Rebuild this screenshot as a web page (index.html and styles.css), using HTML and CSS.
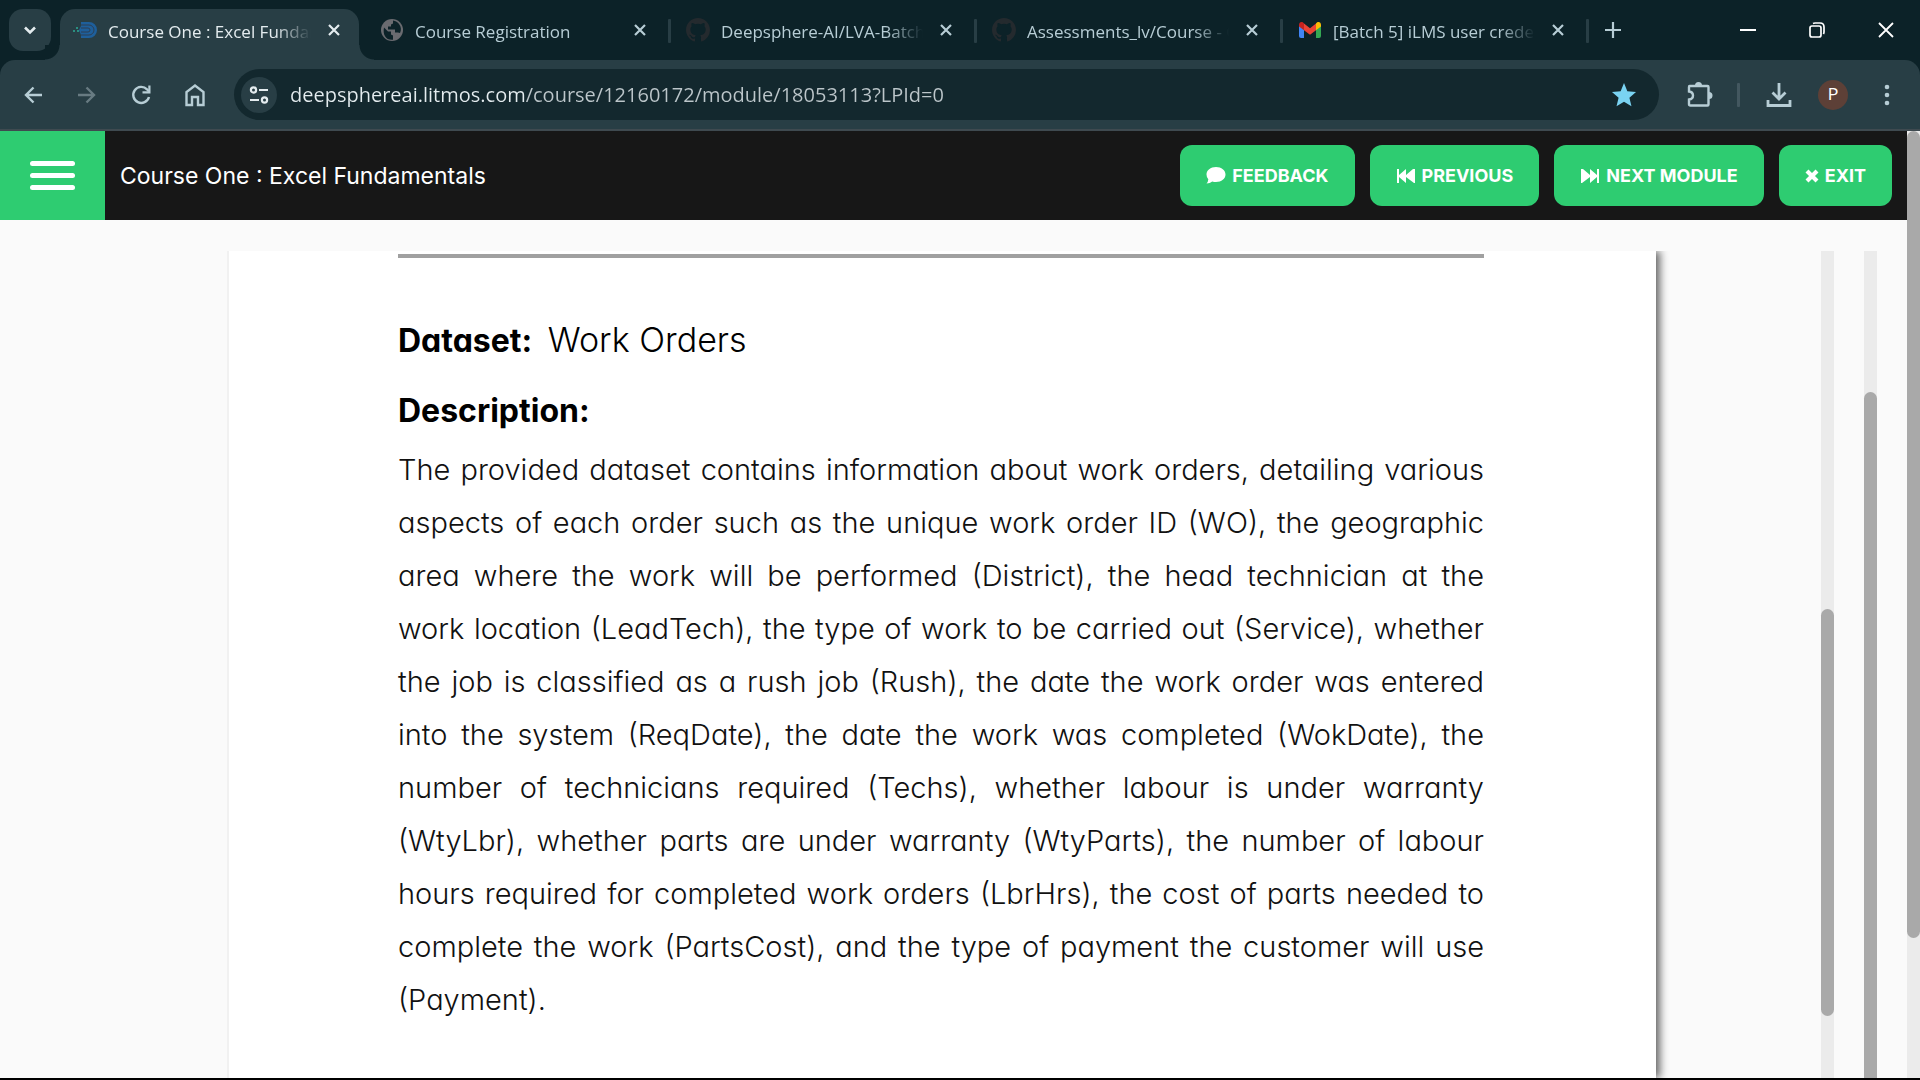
FILE: index.html
```html
<!DOCTYPE html>
<html lang="en">
<head>
<meta charset="utf-8">
<meta name="viewport" content="width=device-width, initial-scale=1">
<title>Course One : Excel Fundamentals</title>
<link rel="stylesheet" href="styles.css">
</head>
<body>
<svg class="defs" aria-hidden="true">
  <symbol id="x" viewBox="0 0 12 12"><path d="M1 1l10 10M11 1L1 11" fill="none" stroke="currentColor" stroke-width="2.2"/></symbol>
  <symbol id="github" viewBox="0 0 16 16"><path fill="currentColor" d="M8 0C3.58 0 0 3.58 0 8c0 3.54 2.29 6.53 5.47 7.59.4.07.55-.17.55-.38 0-.19-.01-.82-.01-1.49-2.01.37-2.53-.49-2.69-.94-.09-.23-.48-.94-.82-1.13-.28-.15-.68-.52-.01-.53.63-.01 1.08.58 1.23.82.72 1.21 1.87.87 2.33.66.07-.52.28-.87.51-1.07-1.78-.2-3.64-.89-3.64-3.95 0-.87.31-1.59.82-2.15-.08-.2-.36-1.02.08-2.12 0 0 .67-.21 2.2.82a7.6 7.6 0 0 1 4 0c1.53-1.04 2.2-.82 2.2-.82.44 1.1.16 1.92.08 2.12.51.56.82 1.27.82 2.15 0 3.07-1.87 3.75-3.65 3.95.29.25.54.73.54 1.48 0 1.07-.01 1.93-.01 2.2 0 .21.15.46.55.38A8 8 0 0 0 16 8c0-4.42-3.58-8-8-8z"/></symbol>
</svg>

<header class="browser">
  <div class="tabstrip">
    <button class="tab-search" aria-label="Search tabs"><svg width="12" height="9" viewBox="0 0 12 9"><path d="M1 1.5l5 5 5-5" fill="none" stroke="currentColor" stroke-width="2.6"/></svg></button>
    <nav class="tabs" aria-label="Tabs">
      <div class="tab active">
        <svg class="favicon" viewBox="0 0 24 24"><path d="M8 4h8a8 8 0 0 1 0 16H8v-3l-2-5 2-4z" fill="#1e5f9b"/><path d="M8 7h8a5 5 0 0 1 0 10H8M8 10h7a2 2 0 0 1 0 4H8" fill="none" stroke="#2d3f53"/><path d="M0 12h2v2H0zM3 9h2v2H3zM4 12h2v2H4z" fill="#2b8f80"/></svg>
        <a class="tab-title" href="#course">Course One : Excel Fundamentals</a>
        <button class="tab-close" aria-label="Close tab"><svg><use href="#x"/></svg></button>
      </div>
      <div class="tab">
        <svg class="favicon globe" viewBox="0 0 24 24"><circle cx="12" cy="12" r="11" fill="#6a6b70"/><path d="M4 9.500l4 4h3v3l2 1v4.300C6 22.500 2.500 17 4 9.500zM13 2.600v3l-2 1v2H8v3h7v3h3l2 .5c3-6-2-12-7-12.500z" fill="#0c2228"/></svg>
        <a class="tab-title" href="#registration">Course Registration</a>
        <button class="tab-close" aria-label="Close tab"><svg><use href="#x"/></svg></button>
      </div>
      <div class="tab">
        <svg class="favicon github"><use href="#github"/></svg>
        <a class="tab-title" href="#batch">Deepsphere-AI/LVA-Batch5</a>
        <button class="tab-close" aria-label="Close tab"><svg><use href="#x"/></svg></button>
      </div>
      <div class="tab">
        <svg class="favicon github"><use href="#github"/></svg>
        <a class="tab-title" href="#assessments">Assessments_lv/Course - One</a>
        <button class="tab-close" aria-label="Close tab"><svg><use href="#x"/></svg></button>
      </div>
      <div class="tab">
        <svg class="favicon" viewBox="0 0 24 24"><path d="M1 7v11q0 2 2 2h3V10z" fill="#4285f4"/><path d="M18 10v10h3q2 0 2-2V7z" fill="#34a853"/><path d="M6 5.500l6 4.700 6-4.700v6.700l-6 4.600-6-4.600z" fill="#ea4335"/><path d="M1 7c0-3 3-4 5-1.500v6.700L1 8.500z" fill="#c5221f"/><path d="M23 7c0-3-3-4-5-1.500v6.700l5-3.700z" fill="#fbbc04"/></svg>
        <a class="tab-title" href="#mail">[Batch 5] iLMS user credentials</a>
        <button class="tab-close" aria-label="Close tab"><svg><use href="#x"/></svg></button>
      </div>
    </nav>
    <button class="new-tab" aria-label="New tab"><svg width="16" height="16" viewBox="0 0 16 16"><path d="M8 0v16M0 8h16" stroke="currentColor" stroke-width="2.200"/></svg></button>
    <div class="window-controls">
      <button aria-label="Minimize"><svg width="16" height="16" viewBox="0 0 16 16"><path d="M0 8h16" stroke="currentColor" stroke-width="2"/></svg></button>
      <button aria-label="Restore"><svg width="16" height="16" viewBox="0 0 16 16"><g fill="none" stroke="currentColor" stroke-width="1.700"><rect x="1" y="4" width="11" height="11" rx="2"/><path d="M4 1.500Q5 1 6 1h5q4 0 4 4v5q0 1-.6 2"/></g></svg></button>
      <button aria-label="Close"><svg width="16" height="16" viewBox="0 0 16 16"><path d="M1 1l14 14M15 1L1 15" stroke="currentColor" stroke-width="1.800"/></svg></button>
    </div>
  </div>
  <div class="toolbar">
    <div class="nav-buttons">
      <button aria-label="Back"><svg viewBox="0 0 24 24"><path d="M21 12H5M12.500 4.500L5 12l7.500 7.500" fill="none" stroke="currentColor" stroke-width="2.400"/></svg></button>
      <button class="dim" aria-label="Forward"><svg viewBox="0 0 24 24"><path d="M3 12h16M11.500 4.500L19 12l-7.500 7.500" fill="none" stroke="currentColor" stroke-width="2.400"/></svg></button>
      <button aria-label="Reload"><svg viewBox="0 0 24 24"><path d="M20 14a8 8 0 1 1-2-7.700L20 8.500" fill="none" stroke="currentColor" stroke-width="2.400"/><path d="M21.500 2.500v8h-8V8.300h5.800V2.500z" fill="currentColor"/></svg></button>
      <button aria-label="Home"><svg viewBox="0 0 24 24"><path d="M3.500 22V9L12 2.500 20.500 9v13H15v-8H9v8z" fill="none" stroke="currentColor" stroke-width="2.400"/></svg></button>
    </div>
    <div class="address">
      <button class="site-info" aria-label="Site information"><svg width="20" height="18" viewBox="0 0 20 18"><g fill="none" stroke="currentColor" stroke-width="2.200"><circle cx="4.500" cy="4" r="2.600"/><path d="M10 4h9M1 14h9"/><circle cx="15.500" cy="14" r="2.600"/></g></svg></button>
      <input class="url" type="text" aria-label="Address" value="deepsphereai.litmos.com/course/12160172/module/18053113?LPId=0">
      <button class="star" aria-label="Bookmark"><svg width="26" height="26" viewBox="0 0 24 24"><path d="M12 1l3.100 7.500 8 .7-6.100 5.300 1.900 7.900L12 18.200 5.100 22.400 7 14.500.9 9.200l8-.7z" fill="currentColor"/></svg></button>
    </div>
    <div class="tools">
      <button aria-label="Extensions"><svg width="27" height="27" viewBox="0 0 27 27"><path d="M3.500 5h18q1 0 1 1v17.500q0 1-1 1h-17q-1.500 0-1.500-1.500v-4.500q4-.5 4-4t-4-4V6q0-1 .5-1z" fill="none" stroke="currentColor" stroke-width="2.400"/><path d="M9 4.500a3.500 3.500 0 0 1 7 0zM23 11a3.500 3.500 0 0 1 0 7z" fill="currentColor"/></svg></button>
      <span class="divider"></span>
      <button aria-label="Downloads"><svg width="26" height="26" viewBox="0 0 26 26"><path d="M13 1v15M6.500 10.500L13 17l6.500-6.500M2 18v5.500h22V18" fill="none" stroke="currentColor" stroke-width="2.800"/></svg></button>
      <button aria-label="Profile"><span class="avatar">P</span></button>
      <button aria-label="Menu"><svg width="6" height="22" viewBox="0 0 6 22"><g fill="currentColor"><circle cx="3" cy="3" r="2.300"/><circle cx="3" cy="11" r="2.300"/><circle cx="3" cy="19" r="2.300"/></g></svg></button>
    </div>
  </div>
</header>

<div class="viewport">
  <div class="page">
    <header class="course-bar">
      <button class="menu" aria-label="Menu"><span></span><span></span><span></span></button>
      <h1>Course One : Excel Fundamentals</h1>
      <div class="actions">
        <button><svg width="20" height="17" viewBox="0 0 20 17"><path d="M10 0c5.500 0 9.500 3.300 9.500 7.500S15.500 15 10 15q-2 0-3.700-.6Q4 16.500.5 16.500q1.700-1.700 1.800-4.200Q.5 10.300.5 7.500C.5 3.300 4.500 0 10 0z" fill="currentColor"/></svg>FEEDBACK</button>
        <button><svg width="20" height="14" viewBox="0 0 20 14"><path d="M1 0h2v6l7-6v6l7-6h2v14h-1l-8-6v6L3 8v6H1z" fill="currentColor"/></svg>PREVIOUS</button>
        <button><svg width="20" height="14" viewBox="0 0 20 14"><path d="M19 0h-2v6l-7-6v6L3 0H1v14h1l8-6v6l7-6v6h2z" fill="currentColor"/></svg>NEXT MODULE</button>
        <button><svg width="14" height="14" viewBox="0 0 14 14"><path d="M2 2l10 10M12 2L2 12" stroke="currentColor" stroke-width="4.200"/></svg>EXIT</button>
      </div>
    </header>
    <main class="reader">
      <article class="sheet">
        <hr>
        <h2>Dataset<span class="colon">:</span> <span class="name">Work Orders</span></h2>
        <h2>Description:</h2>
        <p>
          <span>The provided dataset contains information about work orders, detailing various</span>
          <span>aspects of each order such as the unique work order ID (WO), the geographic</span>
          <span>area where the work will be performed (District), the head technician at the</span>
          <span>work location (LeadTech), the type of work to be carried out (Service), whether</span>
          <span>the job is classified as a rush job (Rush), the date the work order was entered</span>
          <span>into the system (ReqDate), the date the work was completed (WokDate), the</span>
          <span>number of technicians required (Techs), whether labour is under warranty</span>
          <span>(WtyLbr), whether parts are under warranty (WtyParts), the number of labour</span>
          <span>hours required for completed work orders (LbrHrs), the cost of parts needed to</span>
          <span>complete the work (PartsCost), and the type of payment the customer will use</span>
          <span>(Payment).</span>
        </p>
      </article>
      <div class="scroll inner"><i></i></div>
      <div class="scroll outer"><i></i></div>
    </main>
  </div>
  <div class="scroll window"><i></i></div>
</div>
</body>
</html>
```
FILE: styles.css
```css
* { box-sizing: border-box; }
html, body { height: 100%; }
body {
  margin: 0;
  display: flex;
  flex-direction: column;
  background: #fafafa;
  border-bottom: 2px solid #000;
  overflow: hidden;
  font-family: "Open Sans", "Noto Sans", sans-serif;
}
button {
  display: flex;
  align-items: center;
  justify-content: center;
  margin: 0;
  padding: 0;
  border: 0;
  background: none;
  color: inherit;
  font: inherit;
}
svg { display: block; flex: none; }
.defs { position: absolute; width: 0; height: 0; }

/* Browser window */
.browser {
  flex: none;
  background: #0c2228;
  color: #b7cdd5;
  border-bottom: 2px solid #3f4a50;
}
.tabstrip { display: flex; height: 60px; padding: 9px 0 0 9px; }
.tab-search {
  flex: none;
  width: 42px;
  height: 42px;
  margin-right: 9px;
  border-radius: 14px;
  background: #283e45;
  color: #e4ecef;
}
.tabs { display: flex; flex: 0 1 1530px; min-width: 0; }
.tab {
  position: relative;
  flex: 1 1 0;
  min-width: 0;
  display: flex;
  align-items: center;
  padding: 0 20px 9px 14px;
}
.tab::after {
  content: "";
  position: absolute;
  right: 1px;
  top: 10px;
  width: 3px;
  height: 24px;
  border-radius: 1px;
  background: #283e45;
}
.tab.active {
  flex: 0 1 299px;
  margin-right: 7px;
  padding-right: 13px;
  padding-left: 13px;
  background: #283e45;
  border-radius: 15px 15px 0 0;
  color: #e4ecef;
}
.tab.active::before, .tab.active::after {
  content: "";
  position: absolute;
  top: auto;
  bottom: 0;
  width: 15px;
  height: 15px;
  border-radius: 0;
}
.tab.active::before { left: -15px; background: radial-gradient(circle at 0 0, #0c2228 14px, #283e45 15px); }
.tab.active::after { right: -15px; background: radial-gradient(circle at 100% 0, #0c2228 14px, #283e45 15px); }
.favicon { width: 24px; height: 24px; }
.favicon.github { color: #242a2e; }
.tab-title {
  flex: 1;
  min-width: 0;
  margin: 4px 11px 0 11px;
  overflow: hidden;
  white-space: nowrap;
  color: inherit;
  text-decoration: none;
  font-size: 17px;
  line-height: 24px;
  mask-image: linear-gradient(to right, #000 calc(100% - 36px), transparent);
}
.tab-close { width: 24px; height: 24px; }
.tab-close svg { width: 12px; height: 12px; }
.new-tab { flex: none; width: 46px; height: 42px; }
.window-controls { display: flex; margin-left: auto; height: 42px; color: #fff; }
.window-controls button { width: 69px; }

.toolbar {
  display: flex;
  align-items: center;
  height: 69px;
  background: #283e45;
  border-radius: 15px 15px 0 0;
}
.nav-buttons { display: flex; padding: 0 12px 0 6px; }
.nav-buttons button { width: 54px; height: 48px; }
.nav-buttons svg { width: 24px; height: 24px; }
.dim { color: #687b82; }
.address {
  flex: 1;
  min-width: 0;
  display: flex;
  align-items: center;
  height: 51px;
  padding: 0 22px 0 7px;
  border-radius: 26px;
  background: #13282e;
}
.site-info {
  flex: none;
  width: 36px;
  height: 36px;
  border-radius: 50%;
  background: #283e45;
  color: #e4ecef;
}
.url {
  flex: 1;
  min-width: 0;
  margin-left: 13px;
  padding: 0;
  border: 0;
  outline: 0;
  font: 20px/30px "Open Sans", "Noto Sans", sans-serif;
  color: transparent;
  background: linear-gradient(to right, #e4ecef 235px, #bcc6ca 235px);
  background-clip: text;
}
.star { color: #7ad3f2; }
.tools { display: flex; align-items: center; padding: 0 6px 0 13px; }
.tools button { width: 54px; height: 48px; }
.divider { width: 3px; height: 24px; margin: 0 12px 0 11px; border-radius: 1px; background: #43575f; }
.avatar {
  width: 30px;
  height: 30px;
  border-radius: 50%;
  background: #5d4037;
  color: #fff;
  font: 16px/30px Roboto, sans-serif;
}

/* Course page */
.viewport { flex: 1; min-height: 0; display: flex; }
.page { flex: 1; min-width: 0; display: flex; flex-direction: column; }
.course-bar {
  flex: none;
  display: flex;
  align-items: center;
  height: 89px;
  padding-right: 15px;
  background: #171717;
  color: #fff;
  font-family: Inter, "Liberation Sans", sans-serif;
}
.menu {
  flex-direction: column;
  gap: 7px;
  width: 105px;
  height: 100%;
  background: #2ecc71;
}
.menu span { width: 45px; height: 5px; border-radius: 3px; background: #fff; }
h1 { margin: 0 auto 0 15px; font-size: 23px; line-height: 32px; font-weight: 400; white-space: nowrap; }
.actions { display: flex; gap: 15px; }
.actions button {
  gap: 6px;
  height: 61px;
  padding: 0 26px;
  border-radius: 12px;
  background: #2ecc71;
  font-size: 18px;
  font-weight: 700;
  white-space: nowrap;
}

.reader { flex: 1; min-height: 0; display: flex; padding: 31px 30px 0 229px; }
.sheet {
  flex: 1;
  min-width: 0;
  margin-right: 165px;
  padding: 3px 172px 0 169px;
  background: #fff;
  box-shadow: -2px 0 0 #f1f1f1, 4px 0 8px 0 #666;
  clip-path: inset(0 -14px 0 -2px);
  color: #111;
  font-family: Inter, "Open Sans", sans-serif;
  font-feature-settings: "cv11";
}
hr { height: 4px; margin: 0 0 47px; border: 0; background: #a0a0a0; }
h2 { margin: 0; color: #000; font-size: 32px; line-height: 70px; font-weight: 700; }
.colon { margin-right: 8px; }
.name { font-size: 34px; font-weight: 300; }
p { margin: -3px 0 0; font-size: 29px; line-height: 53px; font-weight: 300; }
p span { display: block; white-space: nowrap; text-align: justify; text-align-last: justify; }
p span:last-child { text-align-last: left; }

/* Scroll bars */
.scroll { flex: none; display: grid; width: 13px; background: #ebebeb; }
.scroll i { grid-row: 2; border-radius: 7px; background: #a9a9a9; }
.inner { grid-template-rows: 358fr 407fr 62fr; margin-right: 30px; }
.outer { grid-template-rows: 141fr 686fr; }
.outer i { border-radius: 7px 7px 0 0; }
.window { grid-template-rows: 0fr 807fr 140fr; }
```
